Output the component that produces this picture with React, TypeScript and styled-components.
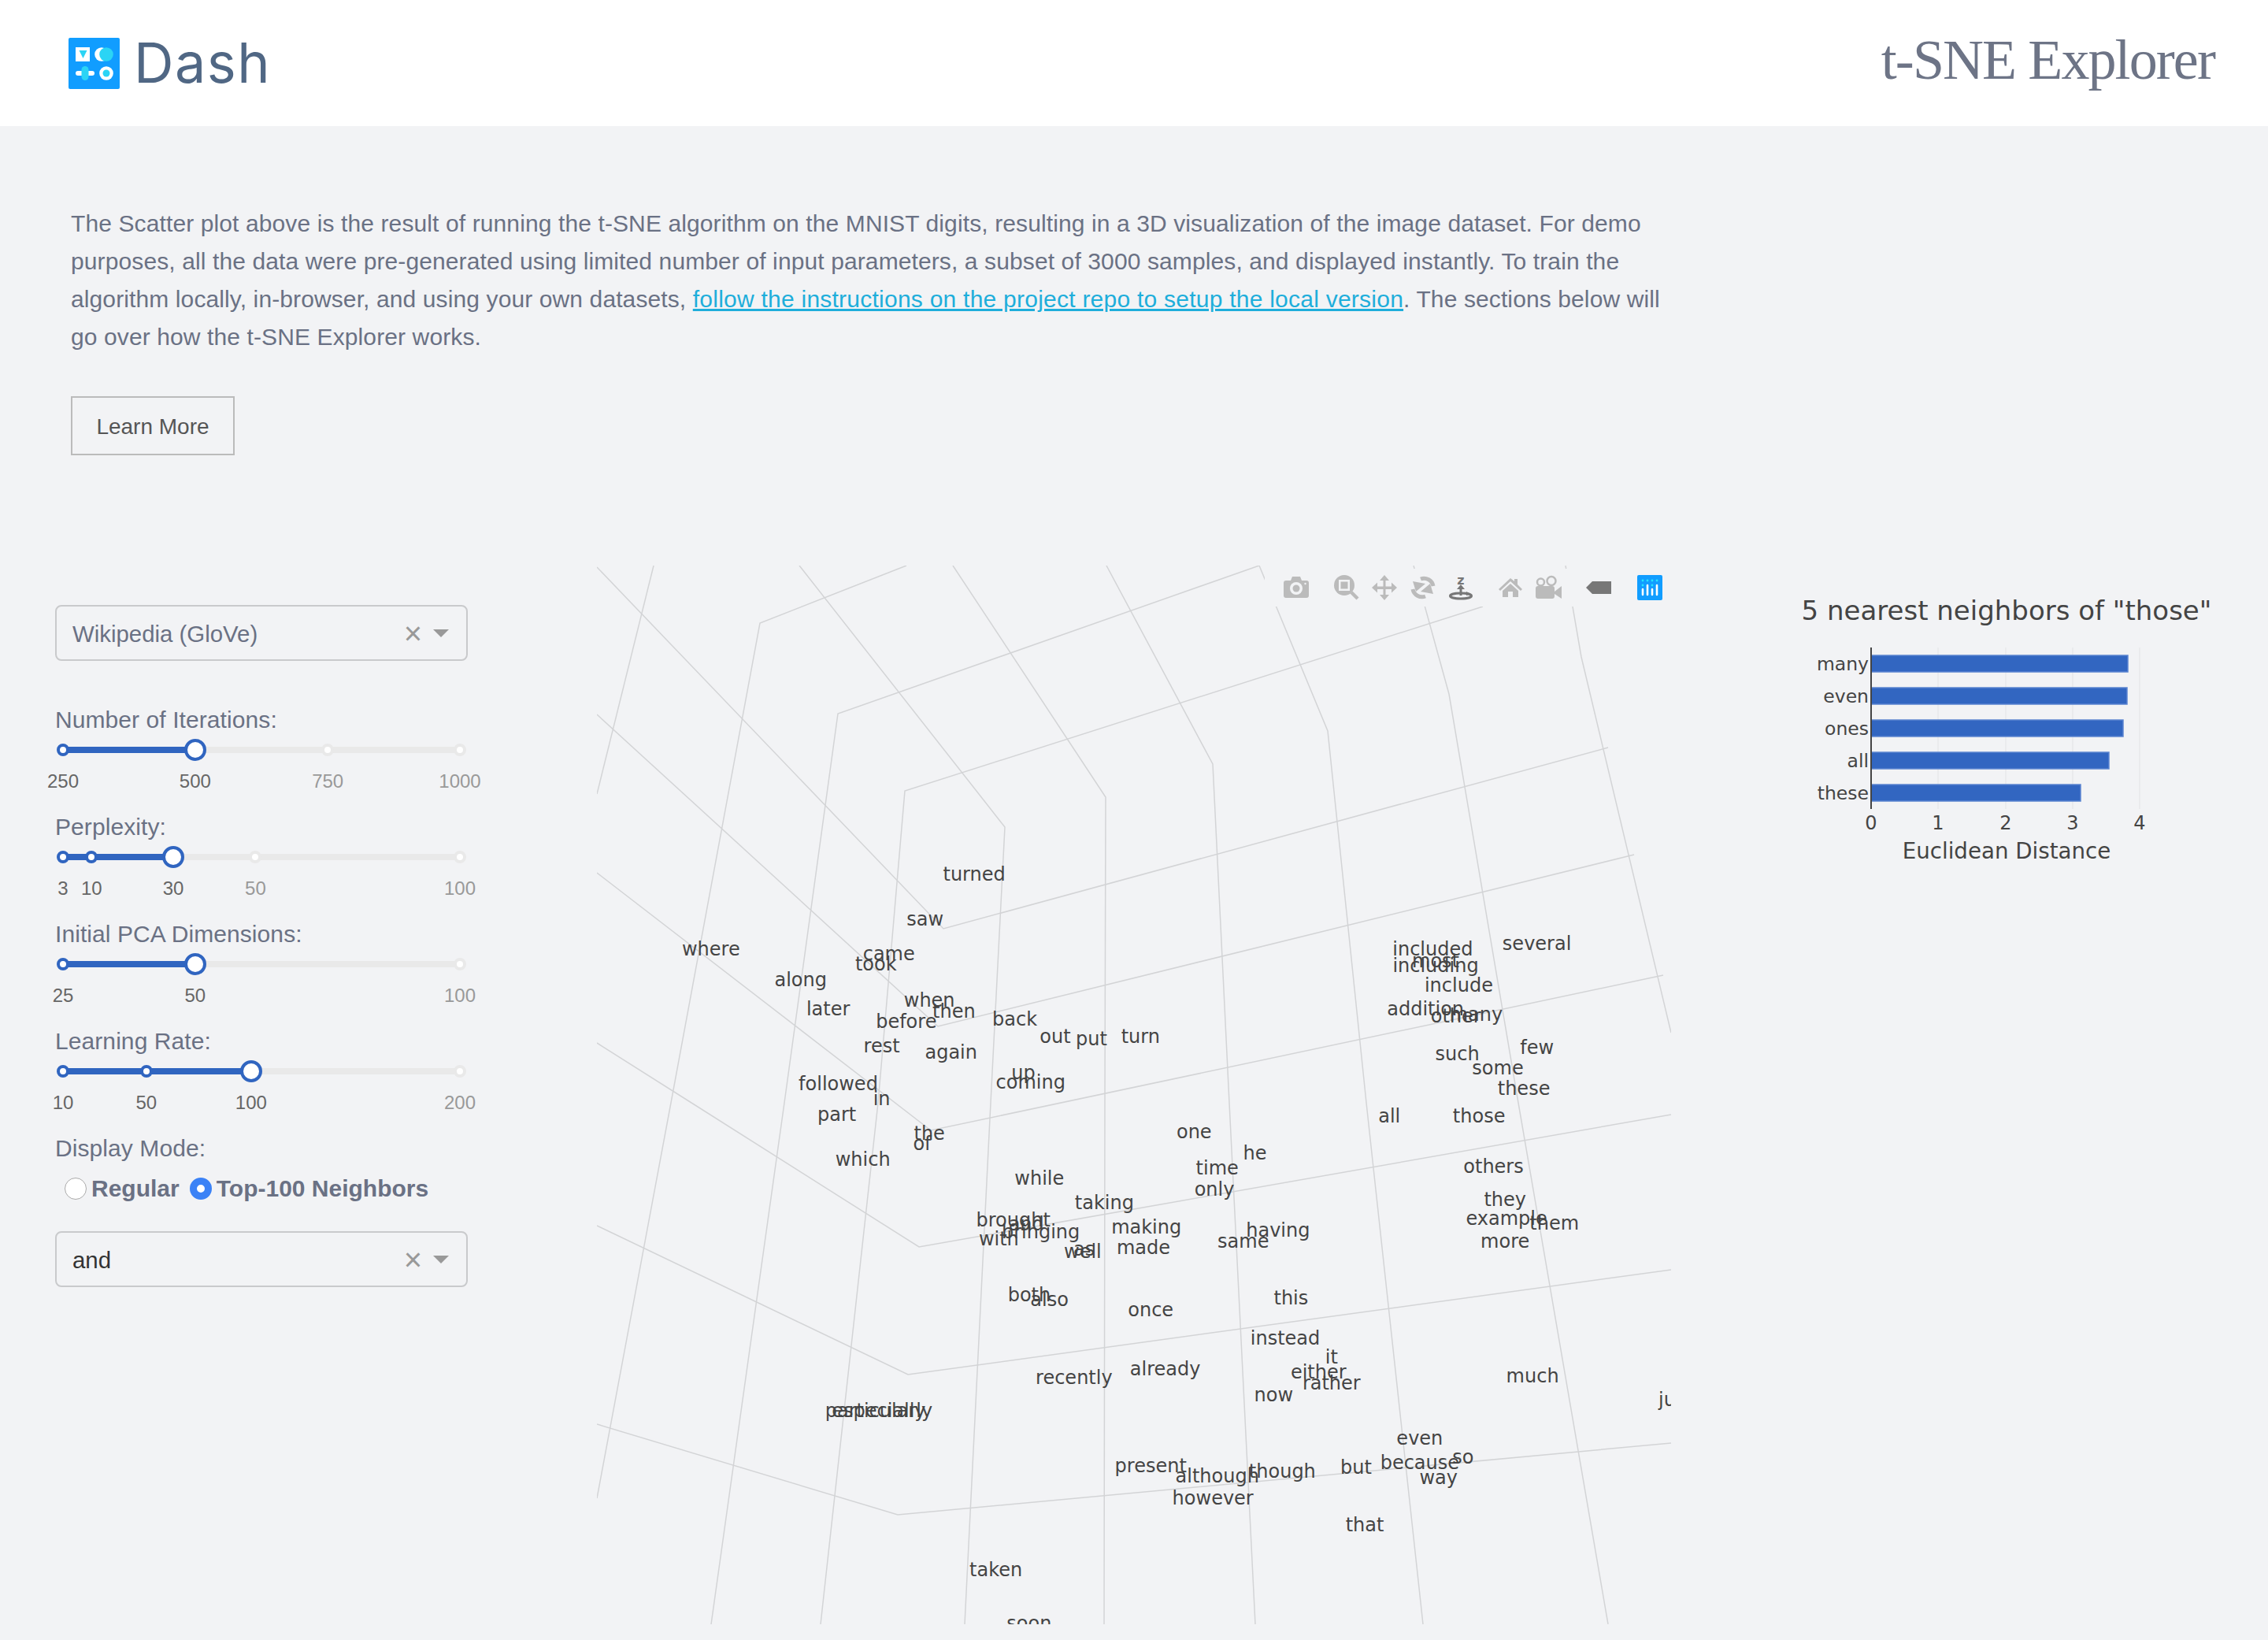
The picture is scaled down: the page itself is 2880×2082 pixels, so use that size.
import React from "react";
import styled, {createGlobalStyle} from "styled-components";

const GlobalStyle = createGlobalStyle`
  html, body {
    margin: 0;
    padding: 0;
    background: #f2f3f5;
  }
  * {
    box-sizing: border-box;
  }
`

const Page = styled.div`
  width: 2880px;
  height: 2082px;
  overflow: hidden;
  background: #f2f3f5;
  font-family: "Liberation Sans", Arial, sans-serif;
  color: #6a7184;
`

const Header = styled.header`
  height: 160px;
  background: white;
  display: flex;
  align-items: center;
  justify-content: space-between;
  padding: 0 68px 0 87px;
`
const Brand = styled.div`
  display: flex;
  align-items: center;
  gap: 18px;
`
const BrandIcon = styled.svg`
  width: 65px;
  height: 65px;
  display: block;
`
const BrandName = styled.span`
  font-family: "Inter", sans-serif;
  font-size: 70px;
  font-weight: 400;
  letter-spacing: 1.5px;
  line-height: 1;
  color: #506784;
`
const Title = styled.h1`
  margin: 0 0 8px;
  font-family: "Liberation Serif", "Times New Roman", serif;
  font-size: 72px;
  font-weight: 400;
  letter-spacing: -1.9px;
  color: #6d7486;
`

const Intro = styled.section`
  padding: 100px 0 0 90px;
  height: 558px;
`
const IntroText = styled.p`
  margin: 0;
  width: 2030px;
  font-size: 30px;
  line-height: 48px;
  letter-spacing: 0.11px;
`
const IntroLink = styled.a`
  color: #1eaedb;
  text-decoration: underline;
  letter-spacing: 0.24px;
`
const LearnMore = styled.button`
  display: block;
  margin-top: 51px;
  width: 208px;
  height: 75px;
  padding-top: 3px;
  border: 2px solid #bbb;
  border-radius: 0;
  background: transparent;
  font-family: inherit;
  font-size: 28px;
  color: #555;
`

const Main = styled.div`
  display: flex;
  align-items: flex-start;
`
const Controls = styled.aside`
  width: 524px;
  margin-left: 70px;
  padding-top: 50px;
`
const SelectBox = styled.div<{$dark?: boolean}>`
  height: 71px;
  display: flex;
  align-items: center;
  padding: 0 22px 0 20px;
  border: 2px solid #c9cacc;
  border-radius: 8px;
  font-size: 29.4px;
  color: ${props => props.$dark ? "#333" : "#6a7184"};
`
const SelectValue = styled.span`
  flex-grow: 1;
  padding-top: 2px;
`
const ClearMark = styled.span`
  font-size: 40px;
  line-height: 1;
  color: #999;
  margin-right: 14px;
`
const CaretDown = styled.span`
  width: 0;
  height: 0;
  border-style: solid;
  border-width: 10px 10px 0;
  border-color: #999 transparent transparent;
`
const Sliders = styled.div`
  margin-top: 54px;
`
const Field = styled.div`
  height: 136px;
`
const FieldLabel = styled.div`
  height: 40px;
  font-size: 30px;
  line-height: 41px;
  letter-spacing: 0.08px;
`
const SliderRail = styled.div`
  position: relative;
  margin: 15px 10px 0;
  height: 8px;
  border-radius: 4px;
  background: #e9e9e9;
`
const SliderFill = styled.div`
  height: 100%;
  border-radius: 4px;
  background: #3065c0;
`
const SliderDot = styled.span<{$on: boolean}>`
  position: absolute;
  top: 50%;
  width: 16px;
  height: 16px;
  transform: translate(-50%, -50%);
  border-radius: 50%;
  background: white;
  border: 4px solid ${props => props.$on ? "#3065c0" : "#e9e9e9"};
`
const SliderThumb = styled.span`
  position: absolute;
  top: 50%;
  width: 28px;
  height: 28px;
  transform: translate(-50%, -50%);
  border-radius: 50%;
  background: white;
  border: 4px solid #3065c0;
`
const SliderMark = styled.span<{$on: boolean}>`
  position: absolute;
  top: 30px;
  transform: translateX(-50%);
  font-size: 24px;
  line-height: 28px;
  color: ${props => props.$on ? "#666" : "#999"};
`
const RadioRow = styled.div`
  display: flex;
  align-items: center;
  height: 34px;
  margin-top: 15px;
  padding-left: 12px;
  font-size: 30px;
  font-weight: 700;
`
const RadioCircle = styled.span<{$checked?: boolean}>`
  width: 28px;
  height: 28px;
  margin-right: 6px;
  border-radius: 50%;
  background: white;
  border: ${props => props.$checked ? "9px solid #3b82f6" : "1px solid #aaa"};
`
const RadioText = styled.span`
  margin-right: 13px;
`
const SecondSelect = styled.div`
  margin-top: 37px;
`

const PlotArea = styled.div`
  position: relative;
  width: 1364px;
  height: 1344px;
  margin-left: 164px;
`
const PlotSvg = styled.svg`
  display: block;
  width: 1364px;
  height: 1344px;
  font-family: "DejaVu Sans", sans-serif;
`
const ModeBar = styled.div`
  position: absolute;
  top: 4px;
  left: 848px;
  right: 0;
  height: 48px;
  display: flex;
  align-items: flex-start;
  padding: 8px 0 0 24px;
  background: #f2f3f5;
`
const ToolIcon = styled.svg<{$gap?: number}>`
  display: block;
  flex: none;
  height: 32px;
  margin-left: ${props => props.$gap || 0}px;
`

const BarColumn = styled.div`
  margin-left: 138px;
`
const BarSvg = styled.svg`
  display: block;
  width: 620px;
  height: 400px;
  font-family: "DejaVu Sans", sans-serif;
`

const SCALE = 2880 / 1568

// [word, x, y] read off the picture, y is the middle of the word
const WORDS: [string, number, number][] = [
    ["turned", 673, 604], ["saw", 639, 635], ["where", 491, 656], ["came", 614, 659],
    ["took", 605, 666], ["along", 553, 677], ["later", 572, 697], ["when", 642, 691],
    ["then", 659, 699], ["before", 626, 706], ["back", 701, 704], ["out", 729, 716],
    ["put", 754, 718], ["turn", 788, 716], ["rest", 609, 723], ["again", 657, 727],
    ["followed", 579, 749], ["up", 707, 741], ["coming", 712, 748], ["in", 609, 759],
    ["part", 578, 770], ["the", 642, 783], ["of", 637, 790], ["which", 596, 801],
    ["one", 825, 782], ["he", 867, 797], ["time", 841, 807], ["only", 839, 822],
    ["while", 718, 814], ["taking", 763, 831], ["brought", 700, 843], ["and", 709, 846],
    ["bringing", 719, 851], ["with", 690, 856], ["making", 792, 848], ["made", 790, 862],
    ["as", 749, 863], ["well", 748, 865], ["same", 859, 858], ["having", 883, 850],
    ["both", 711, 895], ["also", 725, 898], ["once", 795, 905], ["this", 892, 897],
    ["instead", 888, 925], ["it", 920, 938], ["either", 911, 948], ["rather", 920, 956],
    ["now", 880, 964], ["already", 805, 946], ["recently", 742, 952], ["much", 1059, 951],
    ["particularly", 607, 975], ["especially", 607, 975], ["just", 1158, 967], ["even", 981, 994],
    ["so", 1011, 1007], ["because", 981, 1011], ["way", 994, 1021], ["but", 937, 1014],
    ["though", 886, 1017], ["although", 841, 1020], ["present", 795, 1013], ["however", 838, 1035],
    ["that", 943, 1054], ["taken", 688, 1085], ["soon", 711, 1122], ["included", 990, 656],
    ["several", 1062, 652], ["most", 992, 664], ["including", 992, 667], ["include", 1008, 681],
    ["addition", 985, 697], ["other", 1006, 702], ["many", 1020, 701], ["such", 1007, 728],
    ["few", 1062, 724], ["some", 1035, 738], ["these", 1053, 752], ["all", 960, 771],
    ["those", 1022, 771], ["others", 1032, 806], ["they", 1040, 829], ["example", 1041, 842],
    ["them", 1074, 845], ["more", 1040, 858],
]

const GRID_LINES = [
    "830,718 758,1008",
    "1151,718 965,791 852,1400 758,1902",
    "1599,718 1064,906 996,1400 903,2062",
    "1883,770 1149,1004 1115,1400 1042,2062",
    "758,720 1198,1179 2042,949",
    "758,907 1191,1303 2075,1085",
    "758,1108 1182,1435 2112,1238",
    "758,1324 878,1400 1167,1583 2122,1415",
    "758,1556 1153,1745 2122,1612",
    "758,1808 1140,1923 2122,1832",
    "1015,718 1276,1050 1258,1400 1225,2062",
    "1210,718 1404,1012 1403,1400 1402,2062",
    "1405,718 1540,970 1561,1400 1594,2062",
    "1599,718 1686,928 1735,1400 1807,2062",
    "1795,718 1840,881 1928,1400 2042,2062",
    "1988,718 2008,834 2122,1311",
]

const NEIGHBORS: [string, number, number][] = [
    ["many", 832, 2702],
    ["even", 873, 2701],
    ["ones", 914, 2696],
    ["all", 955, 2678],
    ["these", 996, 2642],
]

const SLIDERS = [
    {label: "Number of Iterations:", value: 33.3, marks: [[0, "250"], [33.3, "500"], [66.7, "750"], [100, "1000"]]},
    {label: "Perplexity:", value: 27.8, marks: [[0, "3"], [7.2, "10"], [27.8, "30"], [48.5, "50"], [100, "100"]]},
    {label: "Initial PCA Dimensions:", value: 33.3, marks: [[0, "25"], [33.3, "50"], [100, "100"]]},
    {label: "Learning Rate:", value: 47.4, marks: [[0, "10"], [21, "50"], [47.4, "100"], [100, "200"]]},
] as {label: string, value: number, marks: [number, string][]}[]

const Slider: React.FC<{value: number, marks: [number, string][]}> = ({value, marks}) => (
    <SliderRail>
        <SliderFill style={{width: `${value}%`}}/>
        {marks.map(([at]) => at === value ? null : <SliderDot key={at} $on={at < value} style={{left: `${at}%`}}/>)}
        <SliderThumb style={{left: `${value}%`}}/>
        {marks.map(([at, text]) => <SliderMark key={at} $on={at <= value} style={{left: `${at}%`}}>{text}</SliderMark>)}
    </SliderRail>
)

const Select: React.FC<{value: string, dark?: boolean}> = ({value, dark}) => (
    <SelectBox $dark={dark}>
        <SelectValue>{value}</SelectValue>
        <ClearMark>×</ClearMark>
        <CaretDown/>
    </SelectBox>
)

const ICON_GREY = "#bbb"
const ICON_ACTIVE = "#777"
const BG = "#f2f3f5"

const ModeBarIcons: React.FC = () => (
    <ModeBar>
        <ToolIcon viewBox="0 0 32 32" width="32">
            <path fill={ICON_GREY} d="M3 7h6l2-5h10l2 5h6a3 3 0 0 1 3 3v16a3 3 0 0 1-3 3H3a3 3 0 0 1-3-3V10a3 3 0 0 1 3-3z"/>
            <circle cx="16" cy="17" r="8" fill={BG}/>
            <circle cx="16" cy="17" r="4.5" fill={ICON_GREY}/>
            <circle cx="27.5" cy="11" r="1.2" fill={BG}/>
        </ToolIcon>
        <ToolIcon viewBox="0 0 32 32" width="32" $gap={32}>
            <circle cx="13" cy="13" r="13" fill={ICON_GREY}/>
            <rect x="6" y="6" width="14" height="14" fill={BG}/>
            <rect x="8.5" y="8.5" width="9" height="9" fill={ICON_GREY}/>
            <path d="M22 22l8 8" stroke={ICON_GREY} strokeWidth="4.5"/>
        </ToolIcon>
        <ToolIcon viewBox="0 0 32 32" width="32" $gap={16}>
            <path fill={ICON_GREY} d="M16 0l6 7h-4.5v7.500H25V9.500l7 6.500-7 6.500V18h-7.500v7H22l-6 7-6-7h4.500v-7H7v4.500L0 16l7-6.500V14.500h7.500V7H10z"/>
        </ToolIcon>
        <ToolIcon viewBox="0 0 32 32" width="32" $gap={17}>
            <g fill={ICON_GREY}>
                <path d="M13 5A12 12 0 0 1 29 14" fill="none" stroke={ICON_GREY} strokeWidth="5"/>
                <path d="M19 11L3 8l4 13z"/>
                <path d="M19 27A12 12 0 0 1 3 18" fill="none" stroke={ICON_GREY} strokeWidth="5"/>
                <path d="M13 21l16 3-4-13z"/>
            </g>
        </ToolIcon>
        <ToolIcon viewBox="0 0 32 32" width="32" $gap={17}>
            <text x="15" y="12" textAnchor="middle" fontSize="16" fontWeight="700" fontFamily="DejaVu Sans, sans-serif" fill={ICON_ACTIVE}>z</text>
            <path d="M15 26V17" stroke={ICON_ACTIVE} strokeWidth="3"/>
            <path d="M10 18l5-6 5 6z" fill={ICON_ACTIVE}/>
            <ellipse cx="15" cy="26.500" rx="13.500" ry="3.500" fill="none" stroke={ICON_ACTIVE} strokeWidth="3"/>
            <path d="M22 21l6 3-6 2z" fill={ICON_ACTIVE}/>
        </ToolIcon>
        <ToolIcon viewBox="0 0 32 32" width="32" $gap={31}>
            <path fill={ICON_GREY} d="M15 4L0 18l2 2 13-12 13 12 2-2-6-6V5h-4v3z"/>
            <path fill={ICON_GREY} d="M15 11L5 20v8h7v-7h6v7h7v-8z"/>
        </ToolIcon>
        <ToolIcon viewBox="0 0 33 32" width="33" $gap={15}>
            <circle cx="6.500" cy="9" r="4.500" fill="none" stroke={ICON_GREY} strokeWidth="2.500"/>
            <circle cx="20" cy="7.500" r="5.500" fill="none" stroke={ICON_GREY} strokeWidth="2.500"/>
            <rect x="0" y="14" width="24" height="16" rx="3" fill={ICON_GREY}/>
            <path d="M24 21l9-7v16l-9-6z" fill={ICON_GREY}/>
        </ToolIcon>
        <ToolIcon viewBox="0 0 32 32" width="32" $gap={31}>
            <path fill={ICON_ACTIVE} d="M0 16l8-8h24v16H8z"/>
        </ToolIcon>
        <ToolIcon viewBox="0 0 32 32" width="32" $gap={33}>
            <rect width="32" height="32" rx="2" fill="#119dff"/>
            {[7, 13, 19, 25].map(x => <circle key={x} cx={x} cy="7" r="1.400" fill="#25e4ff"/>)}
            <circle cx="7" cy="13" r="1.400" fill="#25e4ff"/>
            <circle cx="19" cy="13" r="1.400" fill="#25e4ff"/>
            <path d="M7 18v7M13 13v12M19 18v7M25 13v12" stroke="white" strokeWidth="2.600" strokeLinecap="round"/>
        </ToolIcon>
    </ModeBar>
)

const ScatterPlot: React.FC = () => (
    <PlotArea>
        <PlotSvg viewBox="758 718 1364 1344">
            {GRID_LINES.map(points => <polyline key={points} points={points} fill="none" stroke="#d3d4d6" strokeWidth="1.500"/>)}
            {WORDS.map(([word, x, y]) => (
                <text key={word} x={x * SCALE + 1} y={y * SCALE + 8.5} textAnchor="middle" fontSize="24" fill="#444">{word}</text>
            ))}
        </PlotSvg>
        <ModeBarIcons/>
    </PlotArea>
)

const NeighborChart: React.FC = () => (
    <BarColumn>
        <BarSvg viewBox="2260 718 620 400">
            <text x="2548" y="787" textAnchor="middle" fontSize="34" fill="#444">5 nearest neighbors of "those"</text>
            {[2461, 2547, 2632, 2717].map(x => <path key={x} d={`M${x} 822V1027`} stroke="#eaebed" strokeWidth="2"/>)}
            {NEIGHBORS.map(([name, y, end]) => (
                <g key={name}>
                    <rect x="2376" y={y} width={end - 2376} height="21" fill="#3266c1" stroke="#5b85d0" strokeWidth="1.500"/>
                    <text x="2373" y={y + 19} textAnchor="end" fontSize="23.5" fill="#444">{name}</text>
                </g>
            ))}
            <path d="M2376 822V1027" stroke="#444" strokeWidth="2"/>
            {[2376, 2461, 2547, 2632, 2717].map((x, i) => (
                <text key={x} x={x} y="1053" textAnchor="middle" fontSize="24" fill="#444">{i}</text>
            ))}
            <text x="2548" y="1090" textAnchor="middle" fontSize="27.7" fill="#444">Euclidean Distance</text>
        </BarSvg>
    </BarColumn>
)

const App: React.FC = () => (
    <Page>
        <GlobalStyle/>
        <Header>
            <Brand>
                <BrandIcon viewBox="87 47 65 65">
                    <rect x="87" y="47" width="65" height="65" rx="2" fill="#119dff"/>
                    <rect x="96" y="59" width="18" height="18" fill="white"/>
                    <path d="M100.500 63h10l-5 10z" fill="#2bd4f5"/>
                    <circle cx="129" cy="68" r="8.800" fill="white"/>
                    <circle cx="135" cy="68" r="8.800" fill="#2bd4f5"/>
                    <rect x="96" y="89" width="24" height="6" rx="3" fill="white"/>
                    <rect x="103.500" y="83" width="9" height="18" rx="4.500" fill="#2bd4f5"/>
                    <circle cx="135" cy="92" r="8.800" fill="white"/>
                    <circle cx="135" cy="92" r="4.500" fill="#2bd4f5"/>
                </BrandIcon>
                <BrandName>Dash</BrandName>
            </Brand>
            <Title>t-SNE Explorer</Title>
        </Header>
        <Intro>
            <IntroText>
                The Scatter plot above is the result of running the t-SNE algorithm on the MNIST digits, resulting in a 3D visualization of the image dataset. For demo purposes, all the data were pre-generated using limited number of input parameters, a subset of 3000 samples, and displayed instantly. To train the algorithm locally, in-browser, and using your own datasets, <IntroLink>follow the instructions on the project repo to setup the local version</IntroLink>. The sections below will go over how the t-SNE Explorer works.
            </IntroText>
            <LearnMore>Learn More</LearnMore>
        </Intro>
        <Main>
            <Controls>
                <Select value="Wikipedia (GloVe)"/>
                <Sliders>
                    {SLIDERS.map(slider => (
                        <Field key={slider.label}>
                            <FieldLabel>{slider.label}</FieldLabel>
                            <Slider value={slider.value} marks={slider.marks}/>
                        </Field>
                    ))}
                    <FieldLabel>Display Mode:</FieldLabel>
                    <RadioRow>
                        <RadioCircle/>
                        <RadioText>Regular</RadioText>
                        <RadioCircle $checked/>
                        <RadioText>Top-100 Neighbors</RadioText>
                    </RadioRow>
                </Sliders>
                <SecondSelect>
                    <Select value="and" dark/>
                </SecondSelect>
            </Controls>
            <ScatterPlot/>
            <NeighborChart/>
        </Main>
    </Page>
)

export default App;
